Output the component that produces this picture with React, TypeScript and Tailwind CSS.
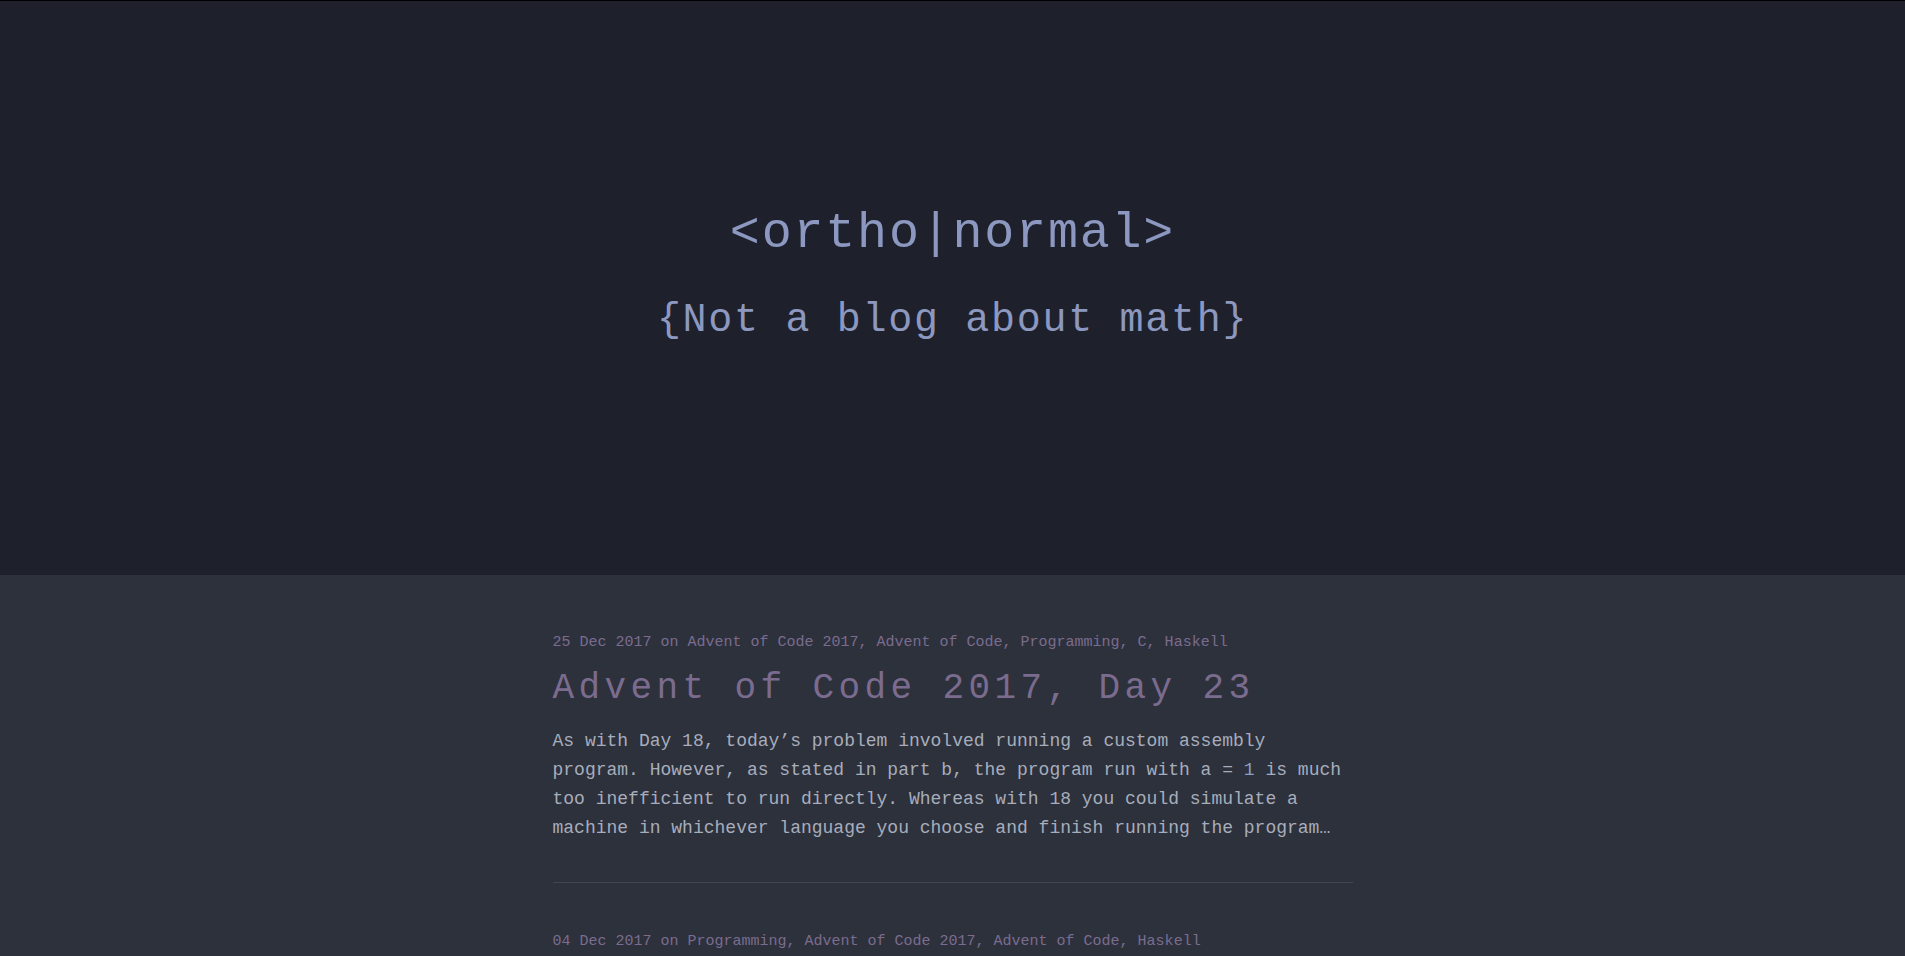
import React from 'react';

const mono = { fontFamily: '"Liberation Mono", "Courier New", monospace' };

interface PostProps {
  date: string;
  tags: string;
  title: string;
  excerpt?: React.ReactNode;
}

const Post: React.FC<PostProps> = ({ date, tags, title, excerpt }) => (
  <article className="pb-[39px] border-b border-[#41454f] mb-[47px]">
    <div className="text-[15px] leading-[24px] text-[#7b6c8f]">
      {date} on {tags}
    </div>
    <h2 className="mt-[12px] text-[36px] leading-[44px] tracking-[4.4px] text-[#7b6c8f]">{title}</h2>
    {excerpt && (
      <p className="mt-[16px] text-[18px] leading-[29px] text-[#a7adbb]">{excerpt}</p>
    )}
  </article>
);

export default function App() {
  return (
    <div className="min-h-screen bg-[#2d313c] border-t border-black" style={mono}>
      <header className="h-[574px] bg-[#1e212c] flex flex-col items-center justify-center pb-[28px]">
        <h1 className="text-[50px] leading-[60px] tracking-[1.8px] text-[#8c98c0]">&lt;ortho|normal&gt;</h1>
        <p className="mt-[33px] text-[40px] leading-[48px] tracking-[1.7px] text-[#8c98c0]">{'{Not a blog about math}'}</p>
      </header>
      <main className="max-w-[800px] mx-auto pt-[56px]">
        <Post
          date="25 Dec 2017"
          tags="Advent of Code 2017, Advent of Code, Programming, C, Haskell"
          title="Advent of Code 2017, Day 23"
          excerpt={
            <>
              As with Day 18, today’s problem involved running a custom assembly program. However, as stated in part b, the program run with a = <span className="text-[#8d9fc9]">1</span> is much too inefficient to run directly. Whereas with 18 you could simulate a machine in whichever language you choose and finish running the program…
            </>
          }
        />
        <Post
          date="04 Dec 2017"
          tags="Programming, Advent of Code 2017, Advent of Code, Haskell"
          title="Advent of Code 2017, Day 4"
        />
      </main>
    </div>
  );
}
